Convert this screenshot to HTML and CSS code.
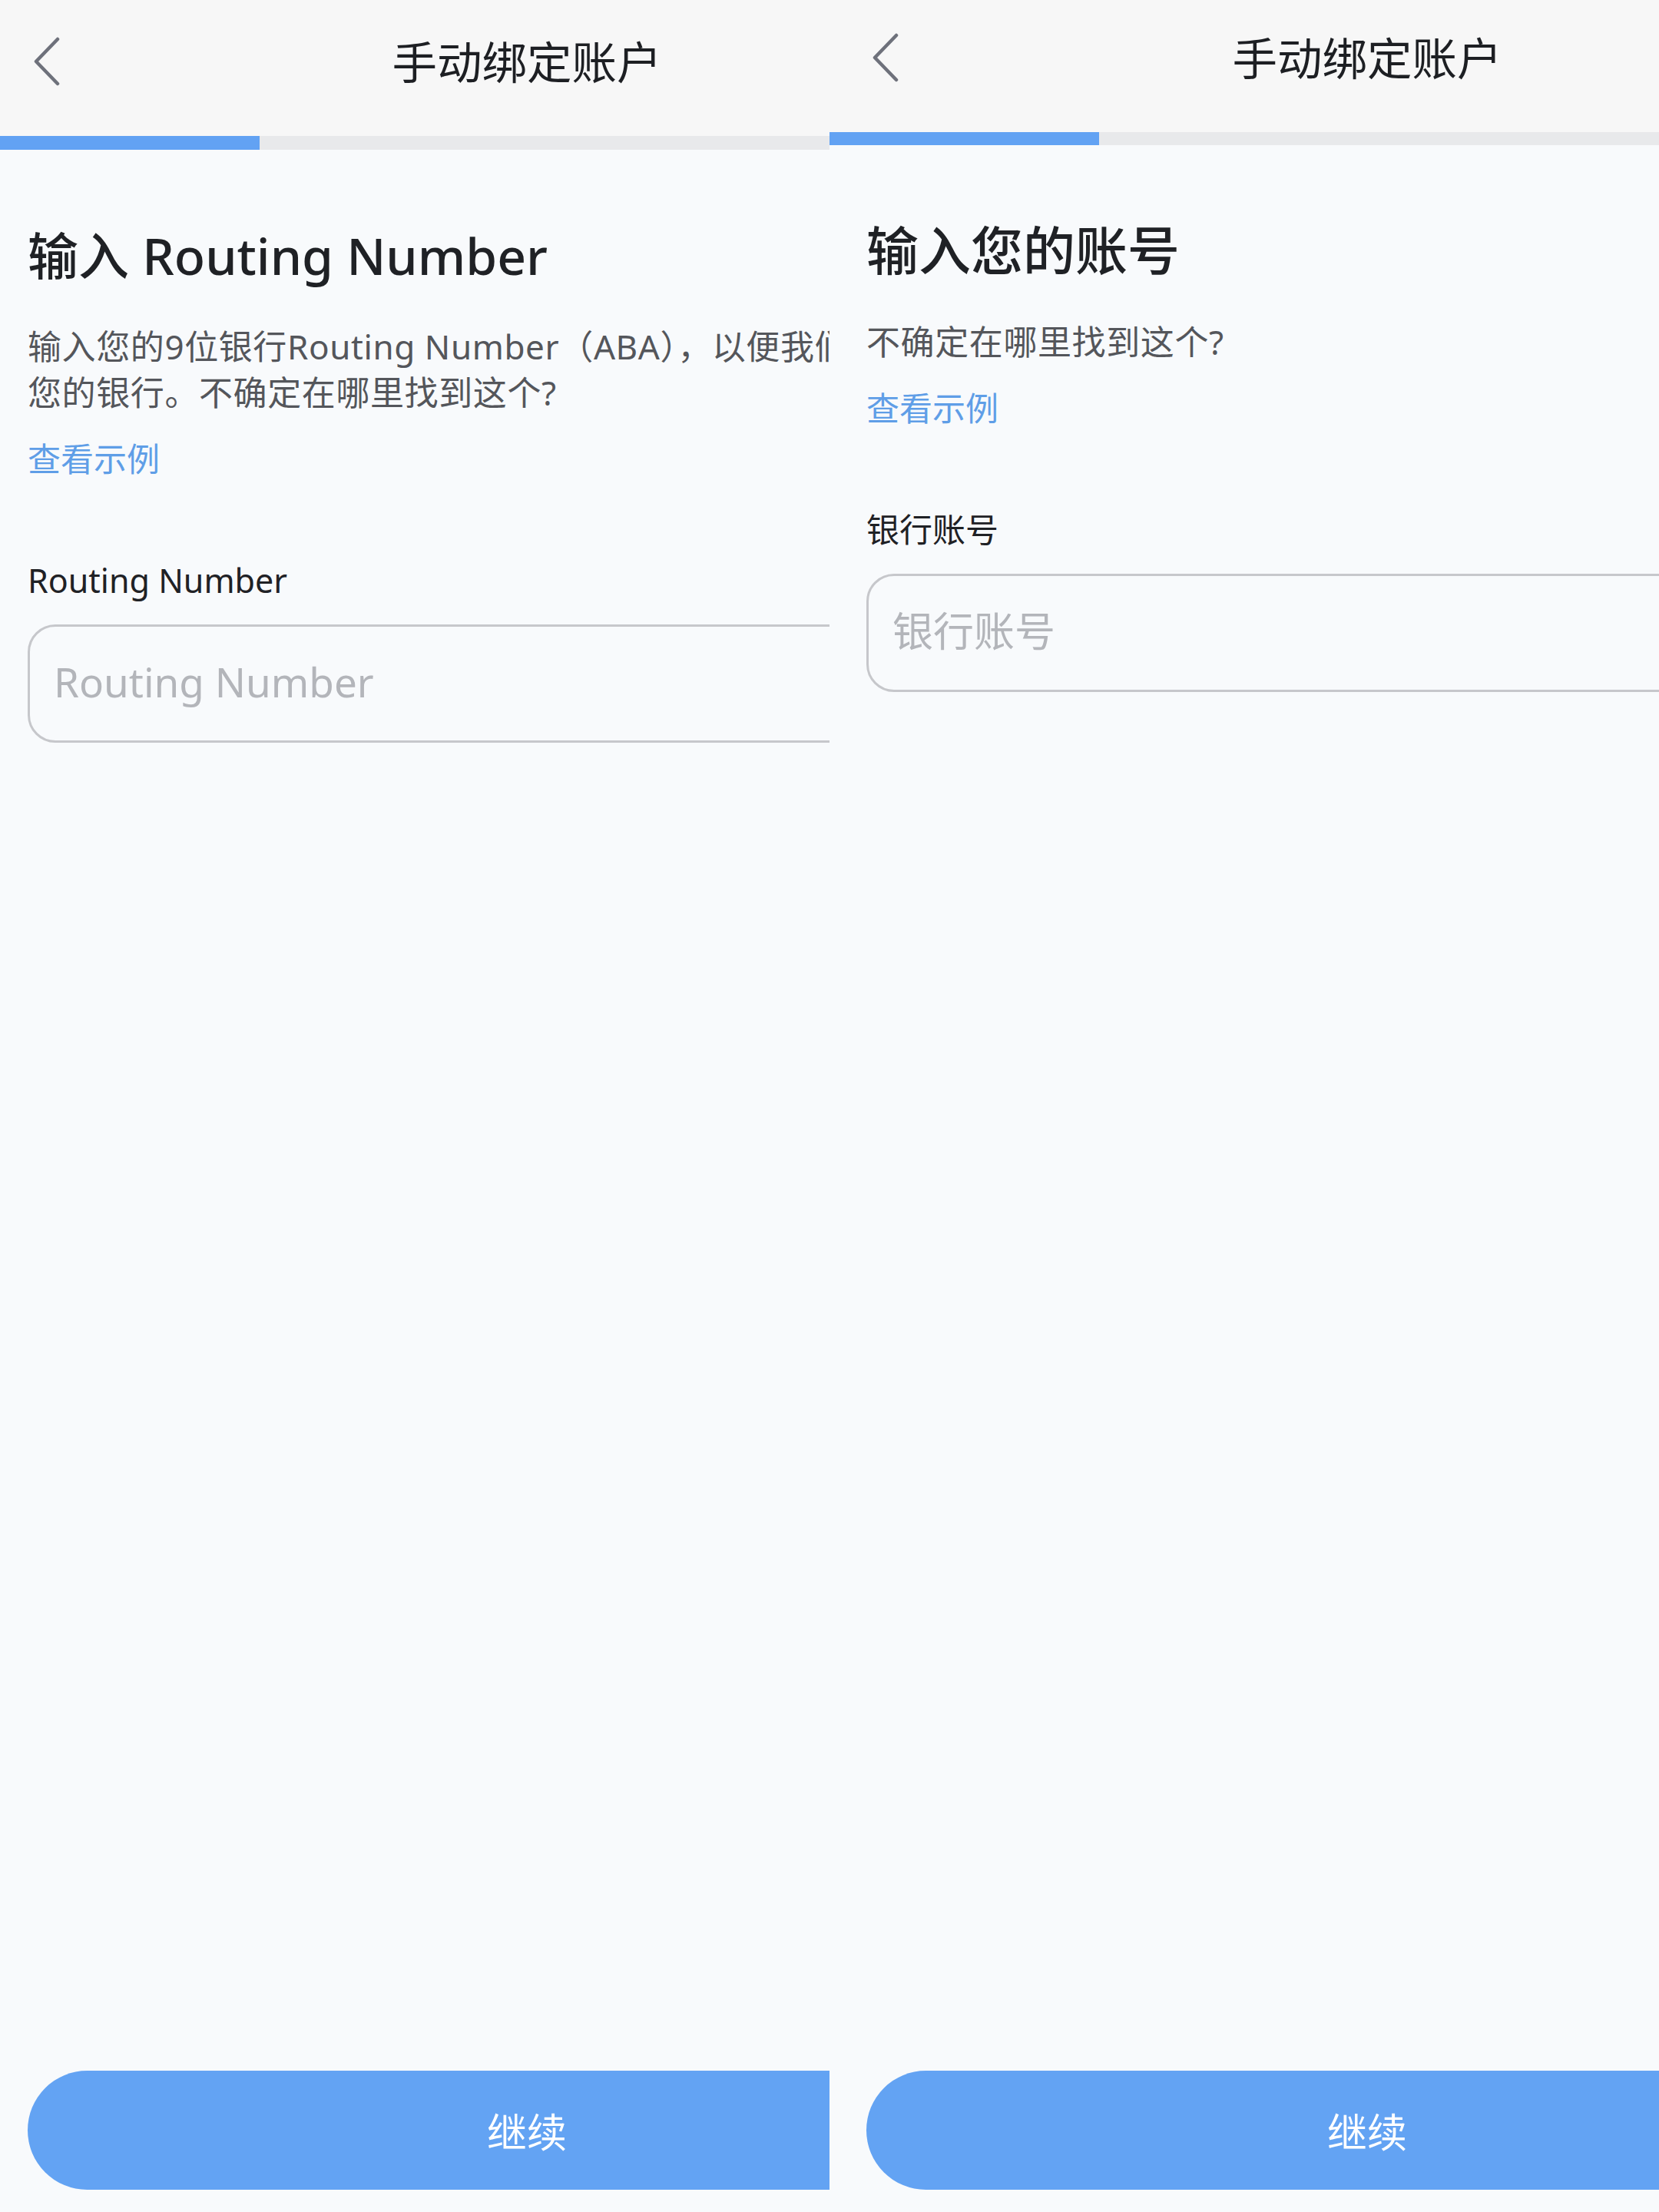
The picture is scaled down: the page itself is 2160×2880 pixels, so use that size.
FILE: index.html
```html
<!DOCTYPE html>
<html lang="zh-CN">
<head>
<meta charset="utf-8">
<title>手动绑定账户</title>
<link rel="stylesheet" href="styles.css">
</head>
<body>
<main class="frames">
  <section class="frame frame--routing">
    <div class="screen">
      <header class="topbar">
        <div class="topbar__row">
          <span class="back" aria-label="返回">
            <svg class="back__icon" viewBox="0 0 36 64" width="36" height="64" aria-hidden="true">
              <polyline points="32,3 4,32 32,61" fill="none" stroke="#6e717b" stroke-width="4.5" stroke-linecap="round" stroke-linejoin="round"/>
            </svg>
          </span>
          <h1 class="topbar__title">手动绑定账户</h1>
          <span class="topbar__spacer"></span>
        </div>
      </header>
      <div class="progress"><div class="progress__fill" style="width:24.6%"></div></div>
      <div class="content">
        <h2 class="heading">输入 Routing Number</h2>
        <p class="desc">输入您的9位银行Routing Number（ABA），以便我们<br>您的银行。不确定在哪里找到这个?</p>
        <a class="link">查看示例</a>
        <span class="field-label">Routing Number</span>
        <div class="field"><span class="field__placeholder">Routing Number</span></div>
      </div>
      <footer class="footer"><button class="cta">继续</button></footer>
    </div>
  </section>

  <section class="frame frame--account">
    <div class="screen">
      <header class="topbar">
        <div class="topbar__row">
          <span class="back" aria-label="返回">
            <svg class="back__icon" viewBox="0 0 36 64" width="36" height="64" aria-hidden="true">
              <polyline points="32,3 4,32 32,61" fill="none" stroke="#6e717b" stroke-width="4.5" stroke-linecap="round" stroke-linejoin="round"/>
            </svg>
          </span>
          <h1 class="topbar__title">手动绑定账户</h1>
          <span class="topbar__spacer"></span>
        </div>
      </header>
      <div class="progress"><div class="progress__fill" style="width:25.1%"></div></div>
      <div class="content">
        <h2 class="heading">输入您的账号</h2>
        <p class="desc">不确定在哪里找到这个?</p>
        <a class="link">查看示例</a>
        <span class="field-label">银行账号</span>
        <div class="field"><span class="field__placeholder">银行账号</span></div>
      </div>
      <footer class="footer"><button class="cta">继续</button></footer>
    </div>
  </section>
</main>
</body>
</html>
```

FILE: styles.css
```css
* {
  box-sizing: border-box;
  margin: 0;
  padding: 0;
}

html,
body {
  background: #f8fafc;
}

body {
  font-family: "Noto Sans", "Noto Sans CJK SC", sans-serif;
  color: #1f2125;
}

.frames {
  display: flex;
  width: 2160px;
  height: 2880px;
}

.frame {
  width: 1080px;
  height: 2880px;
  overflow: hidden;
  background: #f8fafc;
}

.frame--routing {
  --w: 1372px;
  --pad: 36px;
  --row: 160px;
  --row-gap: 17px;
  --bar: 18px;
  --heading-size: 66px;
}

.frame--account {
  --w: 1400px;
  --pad: 48px;
  --row: 150px;
  --row-gap: 22px;
  --bar: 17px;
  --heading-size: 68px;
}

.screen {
  width: var(--w);
  height: 2880px;
  display: flex;
  flex-direction: column;
}

/* Top bar */
.topbar {
  background: #f7f7f7;
  padding-bottom: var(--row-gap);
}

.topbar__row {
  height: var(--row);
  display: grid;
  grid-template-columns: 1fr auto 1fr;
  align-items: center;
  padding: 0 calc(var(--pad) + 7px);
}

.back {
  display: flex;
  align-items: center;
}

.back__icon {
  display: block;
}

.topbar__title {
  font-size: 58.5px;
  font-weight: 400;
  line-height: 1;
  color: #1d1f23;
}

/* Progress */
.progress {
  height: var(--bar);
  background: #e8e9eb;
}

.progress__fill {
  height: 100%;
  background: #62a2f3;
}

/* Content */
.content {
  flex: 1;
  padding: 0 var(--pad);
}

.heading {
  margin-top: 97px;
  font-size: var(--heading-size);
  font-weight: 500;
  line-height: 80px;
  color: #1f2125;
}

.desc {
  margin-top: 49px;
  font-size: 44px;
  line-height: 60px;
  letter-spacing: 0.6px;
  color: #54565b;
  white-space: nowrap;
}

.link {
  display: block;
  margin-top: 27px;
  font-size: 43px;
  line-height: 60px;
  color: #5f9ee7;
}

.field-label {
  display: block;
  margin-top: 98px;
  font-size: 43px;
  line-height: 60px;
  color: #1f2125;
}

.field {
  margin-top: 27px;
  height: 154px;
  border: 3px solid #c6c7cb;
  border-radius: 36px;
  display: flex;
  align-items: center;
  padding-left: 31px;
  padding-bottom: 6px;
}

.field__placeholder {
  font-size: 53px;
  line-height: 1;
  color: #b3b5ba;
}

/* Footer */
.footer {
  padding: 0 var(--pad) 29px;
}

.cta {
  display: flex;
  align-items: center;
  justify-content: center;
  width: 100%;
  height: 155px;
  border: none;
  border-radius: 78px;
  background: #63a3f3;
  color: #ffffff;
  font-family: "Noto Sans", "Noto Sans CJK SC", sans-serif;
  font-size: 52px;
  font-weight: 400;
}
```
